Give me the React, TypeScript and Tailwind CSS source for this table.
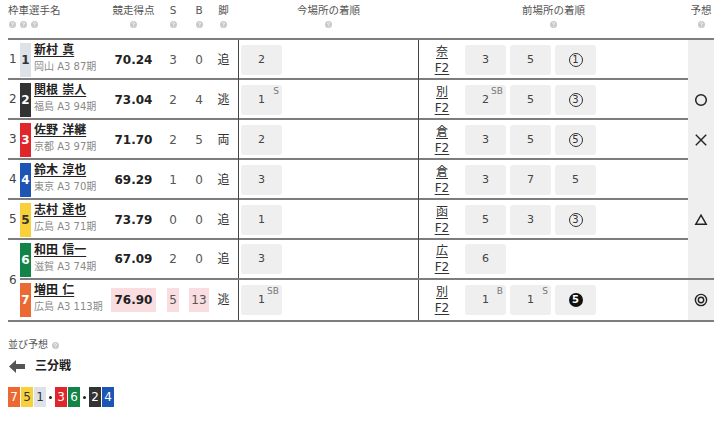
import React from "react";

type Cell = { v: string; sup?: string; mark?: "ring" | "black" };

type Row = {
    waku: number;
    car: number;
    name: string;
    sub: string;
    score: string;
    s: string;
    b: string;
    kyaku: string;
    now: Cell[];
    venue: string;
    prev: Cell[];
    yoso?: "maru" | "batsu" | "sankaku" | "nijumaru";
    hot?: boolean;
};

const carColor: Record<number, string> = {
    1: "bg-[#dde1e8] text-[#333]",
    2: "bg-[#333333] text-white",
    3: "bg-[#e0262b] text-white",
    4: "bg-[#1d55b4] text-white",
    5: "bg-[#f8d13a] text-[#333]",
    6: "bg-[#128447] text-white",
    7: "bg-[#ec6a32] text-white",
};

const rows: Row[] = [
    { waku: 1, car: 1, name: "新村 真", sub: "岡山 A3 87期", score: "70.24", s: "3", b: "0", kyaku: "追", now: [{ v: "2" }], venue: "奈", prev: [{ v: "3" }, { v: "5" }, { v: "1", mark: "ring" }] },
    { waku: 2, car: 2, name: "関根 崇人", sub: "福島 A3 94期", score: "73.04", s: "2", b: "4", kyaku: "逃", now: [{ v: "1", sup: "S" }], venue: "別", prev: [{ v: "2", sup: "SB" }, { v: "5" }, { v: "3", mark: "ring" }], yoso: "maru" },
    { waku: 3, car: 3, name: "佐野 洋継", sub: "京都 A3 97期", score: "71.70", s: "2", b: "5", kyaku: "両", now: [{ v: "2" }], venue: "倉", prev: [{ v: "3" }, { v: "5" }, { v: "5", mark: "ring" }], yoso: "batsu" },
    { waku: 4, car: 4, name: "鈴木 淳也", sub: "東京 A3 70期", score: "69.29", s: "1", b: "0", kyaku: "追", now: [{ v: "3" }], venue: "倉", prev: [{ v: "3" }, { v: "7" }, { v: "5" }] },
    { waku: 5, car: 5, name: "志村 達也", sub: "広島 A3 71期", score: "73.79", s: "0", b: "0", kyaku: "追", now: [{ v: "1" }], venue: "函", prev: [{ v: "5" }, { v: "3" }, { v: "3", mark: "ring" }], yoso: "sankaku" },
    { waku: 6, car: 6, name: "和田 信一", sub: "滋賀 A3 74期", score: "67.09", s: "2", b: "0", kyaku: "追", now: [{ v: "3" }], venue: "広", prev: [{ v: "6" }] },
    { waku: 6, car: 7, name: "増田 仁", sub: "広島 A3 113期", score: "76.90", s: "5", b: "13", kyaku: "逃", now: [{ v: "1", sup: "SB" }], venue: "別", prev: [{ v: "1", sup: "B" }, { v: "1", sup: "S" }, { v: "5", mark: "black" }], yoso: "nijumaru", hot: true },
];

function Help() {
    return (
        <svg width="7" height="7" viewBox="0 0 8 8" className="block">
            <circle cx="4" cy="4" r="4" fill="#c9c9c9" />
            <path d="M2.8 3 Q2.8 1.8 4 1.8 Q5.2 1.8 5.2 2.9 Q5.2 3.6 4.2 4 L4.2 4.9" stroke="#fff" strokeWidth="0.9" fill="none" />
            <circle cx="4.2" cy="6.1" r="0.55" fill="#fff" />
        </svg>
    );
}

function Mark({ kind }: { kind?: Row["yoso"] }) {
    if (!kind) return null;
    return (
        <svg width="14" height="14" viewBox="0 0 14 14" className="block">
            {kind === "maru" && <circle cx="7" cy="7" r="5.3" stroke="#222" strokeWidth="1.5" fill="none" />}
            {kind === "batsu" && <path d="M1.8 1.8 L12.2 12.2 M12.2 1.8 L1.8 12.2" stroke="#222" strokeWidth="1.4" />}
            {kind === "sankaku" && <path d="M7 2.2 L12.3 11.3 L1.7 11.3 Z" stroke="#222" strokeWidth="1.4" fill="none" />}
            {kind === "nijumaru" && (
                <>
                    <circle cx="7" cy="7" r="5.6" stroke="#222" strokeWidth="1.4" fill="none" />
                    <circle cx="7" cy="7" r="2.7" stroke="#222" strokeWidth="1.4" fill="none" />
                </>
            )}
        </svg>
    );
}

function Box({ c }: { c: Cell }) {
    return (
        <div className="relative w-[41px] h-[30px] bg-[#efefef] rounded-[3px] flex items-center justify-center text-[11px] text-[#444]">
            {c.mark === "ring" ? (
                <span className="w-[14px] h-[14px] rounded-full border border-[#333] flex items-center justify-center text-[10px] leading-none text-[#333]">
                    {c.v}
                </span>
            ) : c.mark === "black" ? (
                <span className="w-[14px] h-[14px] rounded-full bg-[#111] flex items-center justify-center text-[10px] font-bold leading-none text-white">
                    {c.v}
                </span>
            ) : (
                c.v
            )}
            {c.sup && <span className="absolute top-[2px] right-[3px] text-[9px] leading-none text-[#777]">{c.sup}</span>}
        </div>
    );
}

function RowBody({ r, line }: { r: Row; line?: boolean }) {
    return (
        <div className={`flex h-[40px] ${line ? "border-b-2 border-[#7d7d7d]" : "h-[38px]"}`}>
            <div className={`w-[11px] h-[34px] mt-[3px] flex items-center justify-center text-[12px] font-bold ${carColor[r.car]}`}>
                {r.car}
            </div>
            <div className="w-[3px]" />
            <div className="w-[76px] pt-[3px]">
                <div className="text-[12px] leading-[15px] font-bold text-[#222] underline underline-offset-2 whitespace-nowrap">{r.name}</div>
                <div className="text-[10px] leading-[14px] mt-[2px] text-[#8a8a8a] whitespace-nowrap">{r.sub}</div>
            </div>
            <div className="w-[47px] flex items-center justify-center">
                <span className={`text-[12px] font-bold text-[#222] px-[4px] leading-[24px] ${r.hot ? "bg-[#f9dde1]" : ""}`}>{r.score}</span>
            </div>
            <div className="w-[32px] flex items-center justify-center">
                <span className={`text-[12px] text-[#555] px-[2px] leading-[24px] ${r.hot ? "bg-[#f9dde1]" : ""}`}>{r.s}</span>
            </div>
            <div className="w-[20px] flex items-center justify-center">
                <span className={`text-[12px] text-[#555] px-[2px] leading-[24px] ${r.hot ? "bg-[#f9dde1]" : ""}`}>{r.b}</span>
            </div>
            <div className="w-[29px] flex items-center justify-center text-[12px] text-[#333]">{r.kyaku}</div>
            <div className="w-[181px] border-x border-[#444] flex items-center pl-[2px]">
                {r.now.map((c, i) => (
                    <Box key={i} c={c} />
                ))}
            </div>
            <div className="w-[269px] flex items-center">
                <div className="w-[46px] text-center text-[12px] leading-[16px] text-[#333] underline underline-offset-2">
                    <div>{r.venue}</div>
                    <div>F2</div>
                </div>
                <div className="flex gap-[4px]">
                    {r.prev.map((c, i) => (
                        <Box key={i} c={c} />
                    ))}
                </div>
            </div>
            <div className="w-[26px] bg-[#efefef] flex items-center justify-center">
                <Mark kind={r.yoso} />
            </div>
        </div>
    );
}

const lineup = [
    { n: 7 }, { n: 5 }, { n: 1 }, { dot: true }, { n: 3 }, { n: 6 }, { dot: true }, { n: 2 }, { n: 4 },
];

export default function App() {
    return (
        <div className="w-[724px] h-[421px] bg-white font-['DejaVu_Sans','Noto_Sans_CJK_JP',sans-serif] overflow-hidden">
            <div className="w-[706px] ml-[8px]">
                {/* 見出し */}
                <div className="flex h-[38px] text-[10.5px] leading-[14px] text-[#555]">
                    <div className="w-[102px] pt-[3px]">
                        <div className="whitespace-nowrap">枠車選手名</div>
                        <div className="flex gap-[4px] ml-[1px] mt-[4px]">
                            <Help />
                            <Help />
                            <Help />
                        </div>
                    </div>
                    {[
                        ["競走得点", "w-[47px]"],
                        ["S", "w-[32px]"],
                        ["B", "w-[20px]"],
                        ["脚", "w-[29px]"],
                        ["今場所の着順", "w-[181px]"],
                        ["前場所の着順", "w-[269px]"],
                        ["予想", "w-[26px]"],
                    ].map(([t, w]) => (
                        <div key={t} className={`${w} pt-[3px] flex flex-col items-center`}>
                            <div className="whitespace-nowrap">{t}</div>
                            <div className="mt-[4px]">
                                <Help />
                            </div>
                        </div>
                    ))}
                </div>

                {/* 出走表 */}
                <div className="border-t-2 border-[#7d7d7d]">
                    {rows.slice(0, 5).map((r) => (
                        <div key={r.car} className="flex border-b-2 border-[#7d7d7d] h-[40px]">
                            <div className="w-[12px] flex items-center text-[12px] text-[#444] pl-[1px]">{r.waku}</div>
                            <RowBody r={r} />
                        </div>
                    ))}
                    <div className="flex border-b-2 border-[#7d7d7d]">
                        <div className="w-[12px] flex items-center text-[12px] text-[#444] pl-[1px]">6</div>
                        <div>
                            <RowBody r={rows[5]} line />
                            <RowBody r={rows[6]} />
                        </div>
                    </div>
                </div>

                {/* 並び予想 */}
                <div className="mt-[17px] flex items-center gap-[4px] text-[10px] leading-[12px] text-[#555]">
                    <span>並び予想</span>
                    <Help />
                </div>
                <div className="mt-[7px] h-[16px] flex items-center">
                    <svg width="16" height="13" viewBox="0 0 16 13" className="ml-[1px]">
                        <path d="M0 6.5 L7 0 L7 4 L16 4 L16 9 L7 9 L7 13 Z" fill="#555" />
                    </svg>
                    <span className="ml-[10px] text-[12px] font-bold text-[#222]">三分戦</span>
                </div>
                <div className="mt-[13px] flex items-center gap-[1px]">
                    {lineup.map((x, i) =>
                        x.dot ? (
                            <span key={i} className="w-[7px] flex justify-center">
                                <span className="w-[3px] h-[3px] rounded-full bg-[#222]" />
                            </span>
                        ) : (
                            <span key={i} className={`w-[12px] h-[20px] flex items-center justify-center text-[12px] ${carColor[x.n as number]}`}>
                                {x.n}
                            </span>
                        )
                    )}
                </div>
            </div>
        </div>
    );
}
